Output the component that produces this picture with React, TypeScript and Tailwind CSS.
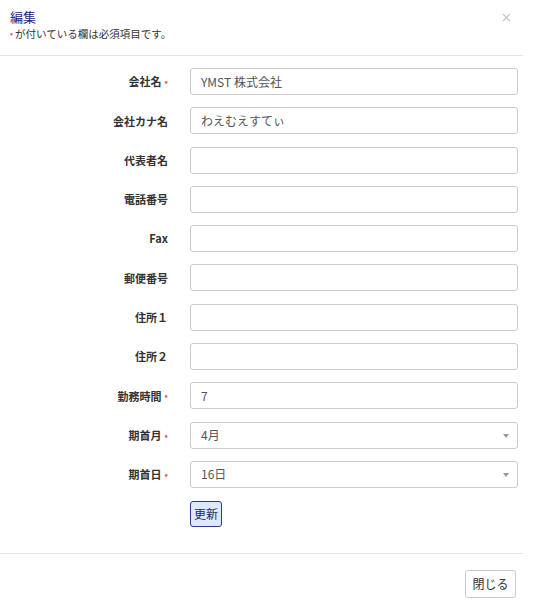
import { X } from "lucide-react";

const fields: { label: string; required?: boolean; value?: string; select?: boolean }[] = [
    { label: "会社名", required: true, value: "YMST 株式会社" },
    { label: "会社カナ名", value: "わえむえすてぃ" },
    { label: "代表者名" },
    { label: "電話番号" },
    { label: "Fax" },
    { label: "郵便番号" },
    { label: "住所１" },
    { label: "住所２" },
    { label: "勤務時間", required: true, value: "7" },
    { label: "期首月", required: true, value: "4月", select: true },
    { label: "期首日", required: true, value: "16日", select: true },
];

const Dot = () => <span className="text-[#e06666] text-[9px] ml-[3px] leading-none">•</span>;

const App = () => {
    return <div
        className="w-[523px] min-h-[607px] bg-white text-[12px] text-[#333]"
        style={{ fontFamily: '"Noto Sans CJK JP", "Noto Sans", sans-serif' }}
    >
        <div className="relative h-[56px] border-b border-[#e5e5e5] pl-[10px] pt-[8px]">
            <div className="text-[13px] leading-[18px] text-[#1f1f7a]">編集</div>
            <div className="text-[10.5px] leading-[16px] text-[#333] flex items-center">
                <span className="text-[#e06666] text-[9px] mr-[2px]">•</span>が付いている欄は必須項目です。
            </div>
            <X className="absolute right-[10px] top-[11px] h-[13px] w-[13px] text-[#c4c4c4]" strokeWidth={2} />
        </div>

        <div className="pt-[12px] pb-[26px] flex flex-col gap-[12.3px]">
            {fields.map((f) => (
                <div key={f.label} className="flex items-center">
                    <div className="w-[168px] flex items-center justify-end font-bold text-[11px] text-[#333]">
                        <span>{f.label}</span>
                        {f.required && <Dot />}
                    </div>
                    <div className="relative ml-[22px] w-[328px] h-[27px] border border-[#ccc] rounded-[3px] flex items-center px-[10px] text-[12px] text-[#555]">
                        {f.value}
                        {f.select && (
                            <span className="absolute right-[8px] top-[11px] w-0 h-0 border-l-[3px] border-r-[3px] border-t-[4px] border-l-transparent border-r-transparent border-t-[#999]" />
                        )}
                    </div>
                </div>
            ))}
            <div className="pl-[190px] pt-[1px]">
                <button className="h-[26px] px-[3px] bg-[#dde9ff] border border-[#2a3c8a] rounded-[3px] text-[12px] text-[#1a2a6a]">
                    更新
                </button>
            </div>
        </div>

        <div className="border-t border-[#e5e5e5] flex justify-end pt-[16px] pr-[7px]">
            <button className="h-[28px] w-[51px] border border-[#ccc] rounded-[3px] text-[12px] text-[#333] bg-white">
                閉じる
            </button>
        </div>
    </div>
};

export default App;
